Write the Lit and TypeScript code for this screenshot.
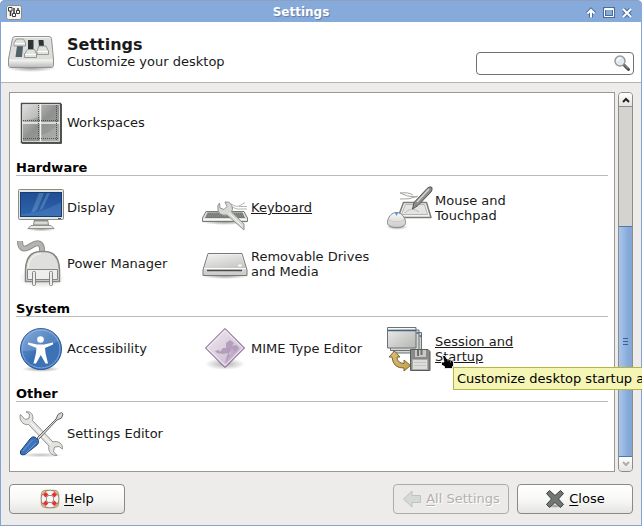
import { LitElement, html, css, svg, type TemplateResult } from "lit";
import { customElement, property, state } from "lit/decorators.js";
import { classMap } from "lit/directives/class-map.js";

const gradients = svg`
  <defs>
    <linearGradient id="metal" x1="0" y1="0" x2="0" y2="1">
      <stop offset="0" stop-color="#fafafa" /><stop offset="1" stop-color="#c9cac7" />
    </linearGradient>
    <linearGradient id="front" x1="0" y1="0" x2="0" y2="1">
      <stop offset="0" stop-color="#f8f8f8" /><stop offset="1" stop-color="#bcbdba" />
    </linearGradient>
    <linearGradient id="steel" x1="0" y1="0" x2="1" y2="1">
      <stop offset="0" stop-color="#ededeb" /><stop offset="1" stop-color="#b4b6b2" />
    </linearGradient>
    <linearGradient id="pane" x1="0" y1="0" x2="1" y2="1">
      <stop offset="0" stop-color="#d2d3d1" /><stop offset="0.5" stop-color="#8f918e" /><stop offset="1" stop-color="#a3a5a2" />
    </linearGradient>
    <linearGradient id="screen" x1="0" y1="0" x2="0" y2="1">
      <stop offset="0" stop-color="#1f4e94" /><stop offset="1" stop-color="#2f66ad" />
    </linearGradient>
    <linearGradient id="blue" x1="0" y1="0" x2="1" y2="1">
      <stop offset="0" stop-color="#6f9fd8" /><stop offset="0.5" stop-color="#3a70b4" /><stop offset="1" stop-color="#3f74b8" />
    </linearGradient>
    <linearGradient id="violet" x1="0" y1="0" x2="1" y2="1">
      <stop offset="0" stop-color="#f2edf3" /><stop offset="1" stop-color="#c3afc9" />
    </linearGradient>
    <linearGradient id="gold" x1="0" y1="0" x2="1" y2="1">
      <stop offset="0" stop-color="#d9be78" /><stop offset="1" stop-color="#c4a04e" />
    </linearGradient>
    <radialGradient id="shade">
      <stop offset="0" stop-color="#000" stop-opacity="0.4" /><stop offset="1" stop-color="#000" stop-opacity="0" />
    </radialGradient>
  </defs>`;

const wrenchPath =
  "M3.5 4.5 L8 9.5 L12 8.5 L12.5 4 L9 1.8 C14 1 17 5 15.5 10.5 L36 32 C41 30 46 34 45.5 39 L42 36.5 L37.5 37 L36.5 41.5 L40 45.5 C34.5 46 30.5 41 32 36 L11.5 14.5 C6 15.5 1.5 10 3.5 4.5 Z";

const glyphs: Record<string, TemplateResult> = {
  mixer: svg`
    <ellipse cx="24" cy="40" rx="25" ry="4" fill="url(#shade)" />
    <path d="M8 8.500 H42 Q44 8.500 44.500 10.500 L46.500 31 V37 Q46.500 39.500 44 39.500 H4 Q1.500 39.500 1.500 37 V31 L5.500 10.500 Q6 8.500 8 8.500 Z" fill="#dddedb" stroke="#90928e" />
    <path d="M2.200 31.500 H45.800 V37 Q45.800 39 44 39 H4 Q2.200 39 2.200 37 Z" fill="url(#front)" />
    <path d="M7.500 9.500 H42.500" stroke="#f6f6f6" />
    <path d="M21 12 H26.500 V21 H21 Z M31.500 12 H36.500 L37 19 H32 Z" fill="#2e3436" />
    <path d="M10 18 H16 L15 29 H8.500 Z" fill="#50616a" />
    <path d="M9.500 11 H16.500 L18.500 15 V18 H7 V15 Z" fill="#e0e2de" stroke="#858880" stroke-width="0.800" />
    <path d="M20.500 21.500 H27.500 L29.500 26 V29.500 H17.500 V26 Z" fill="#e0e2de" stroke="#858880" stroke-width="0.800" />
    <path d="M32 18 H39 L41.500 23 V26.500 H30 V23 Z" fill="#e0e2de" stroke="#858880" stroke-width="0.800" />
    <path d="M7.500 15.500 H18 M18 26.500 H29 M30.500 23.500 H41" stroke="#fff" />`,
  workspaces: svg`
    <rect x="4.500" y="4.500" width="39" height="39" fill="#fff" stroke="#4c4e4c" stroke-width="1.500" />
    <rect x="6" y="6" width="36" height="36" fill="url(#pane)" />
    <path d="M6 6 H23 V17 Q15 21 6 21 Z" fill="#fff" opacity="0.25" />
    <path d="M24 36 Q36 34 42 22 V42 H24 Z" fill="#fff" opacity="0.12" />
    <path d="M23.500 5 V43 M5 24 H43" stroke="#f2f2f2" stroke-width="1.500" />
    <path d="M21.500 6 V42 M39.500 6 V42 M6 21.500 H42 M6 39.500 H42" stroke="#505250" stroke-dasharray="1 1" fill="none" />
    <path d="M44.500 5 V44.500 H5" stroke="#555" fill="none" />`,
  display: svg`
    <ellipse cx="24" cy="45" rx="15" ry="2.500" fill="url(#shade)" />
    <path d="M17.500 35 H30.500 L31.500 41 H16.500 Z" fill="url(#metal)" stroke="#8a8c87" />
    <path d="M17 36.500 H31" stroke="#8a8c87" stroke-width="2" />
    <path d="M14 41.500 H34 L37 44.500 H11 Z" fill="#e9eae7" stroke="#8f918b" />
    <rect x="1.500" y="5.500" width="45" height="30" rx="1" fill="#e6e7e3" stroke="#8a8c86" />
    <rect x="3.500" y="8.500" width="41" height="24" fill="url(#screen)" stroke="#153c74" />
    <path d="M22 9 H27 L20 26 Q18 28 14 29 Z M30 9 H33 L26 24 L22 27 Z" fill="#9dbde6" opacity="0.3" />
    <path d="M4 30 Q26 29 44 18 V32 H4 Z" fill="#6f9bd6" opacity="0.25" />
    <path d="M41 34.500 H44" stroke="#555" />`,
  power: svg`
    <ellipse cx="25" cy="38" rx="23" ry="10" fill="url(#shade)" opacity="0.6" />
    <path d="M3 1 C3 8 6 9.500 10 8 S18 2 22 3.500 Q25.500 5 25 12" fill="none" stroke="#8f918d" stroke-width="6" />
    <path d="M3 1 C3 8 6 9.500 10 8 S18 2 22 3.500 Q25.500 5 25 12" fill="none" stroke="#b4b5b3" stroke-width="4" />
    <path d="M8.500 41.500 V30 Q9 12 23 11.500 H28 Q42 12 42.500 30 V41.500 Z" fill="#dfe0de" stroke="#858783" stroke-width="1.500" />
    <path d="M10.500 29.500 H40.500 V39.500 H10.500 Z" fill="#eeeeec" stroke="#858783" />
    <path d="M11 28 Q12 15 24 13.500" fill="none" stroke="#f8f8f8" />
    <rect x="15.500" y="31.500" width="3" height="14" rx="1" fill="#ececea" stroke="#858783" />
    <rect x="32.500" y="31.500" width="3" height="14" rx="1" fill="#ececea" stroke="#858783" />`,
  keyboard: svg`
    <ellipse cx="24" cy="38" rx="24" ry="3" fill="url(#shade)" />
    <path d="M30 20 Q36 24 40 21 T44 19 M31 23 L36 25 H46 M38 22.500 H46" fill="none" stroke="#b4b6b3" />
    <path d="M5 27.500 H43 L46.500 34 V37.500 H1.500 V34 Z" fill="#dfe0dd" stroke="#777974" />
    <path d="M6.500 28.500 H41.500 L44 34 H4 Z" fill="#777976" />
    <path d="M6 30 H42 M5 32 H43" stroke="#9c9e9a" stroke-dasharray="1 1" />
    <path d="M2 35.500 H46" stroke="#f7f7f6" />
    <path d="M18.500 19 L19 24 L23 25.500 L26 22.500 L24 18 Q31 17 31.500 25 L30.500 28 L43 40 V46 L26 31 Q18 32 17 26 Q16 21 18.500 19 Z" fill="#d6d8d4" stroke="#92948f" />
    <path d="M28 29 L41 42" stroke="#f6f6f5" />`,
  drive: svg`
    <ellipse cx="24" cy="36" rx="24" ry="3" fill="url(#shade)" />
    <path d="M7 13.500 H41 L46 30 V35.500 H2 V30 Z" fill="url(#metal)" stroke="#777974" stroke-linejoin="round" />
    <path d="M8 14.500 H40 L44.500 28 H3.500 Z" fill="url(#steel)" opacity="0.6" />
    <path d="M3 28.500 H45" stroke="#fdfdfd" />
    <path d="M6 30.500 H41" stroke="#4c4e4b" stroke-width="1.500" />
    <ellipse cx="39" cy="25.500" rx="2" ry="1.200" fill="#f7f7f6" />`,
  mouse: svg`
    <path d="M15 9 Q22 13 32 13 M15 15 Q24 16 33 12 M15 9 Q24 8 28 11" fill="none" stroke="#a2a4a1" />
    <path d="M18.500 18.500 H41.500 L46 33.500 H13 Z" fill="#f3f3f2" stroke="#7a7c79" stroke-width="1.500" stroke-linejoin="round" />
    <path d="M20.500 20.500 H39.500 L42.500 30.500 H16.500 Z" fill="#e4e5e3" stroke="#b4b6b3" />
    <path d="M20 29 Q26 22 34 28" fill="none" stroke="#bbb" />
    <path d="M27.500 25 L29 18.500 L42 4.500 Q45 1.500 47 3.500 Q47.500 6 46 8 L33 21.500 Z" fill="#8b8d89" stroke="#555754" />
    <path d="M32 18 L44 5" stroke="#d5d6d3" stroke-width="1.500" />
    <ellipse cx="12" cy="43" rx="11" ry="3" fill="url(#shade)" />
    <path d="M11.500 28.500 C17 28.500 20.500 34 20.500 38.500 C20.500 42 17 43.500 11.500 43.500 S2.500 42 2.500 38.500 C2.500 34 6 28.500 11.500 28.500 Z" fill="url(#metal)" stroke="#858783" />
    <path d="M3.500 36 Q11.500 40 19.500 36" fill="none" stroke="#c8c9c6" />
    <path d="M9.500 28 H13.500 L11.500 32 Z" fill="#5b92d5" />`,
  accessibility: svg`
    <ellipse cx="24" cy="44" rx="19" ry="3" fill="url(#shade)" />
    <circle cx="24" cy="24" r="20.500" fill="url(#blue)" stroke="#2b5a99" />
    <circle cx="24" cy="24" r="19" fill="none" stroke="#7fa9de" />
    <path d="M5.500 26 Q22 27 42 16 A19 19 0 0 0 5.500 26 Z" fill="#fff" opacity="0.15" />
    <circle cx="23.500" cy="14.500" r="3.300" fill="#fff" />
    <path d="M11 17.500 L20 19.500 H27 L36 17.500 V19.500 L28 23 L28.500 28 L31 38.500 H28.500 L23.800 30 L19 38.500 H16.500 L19 28 L19.500 23 L11 19.500 Z" fill="#fff" />`,
  mime: svg`
    <ellipse cx="24" cy="39" rx="20" ry="6" fill="url(#shade)" opacity="0.8" />
    <path d="M24 3.500 L43.500 23 L24 42.500 L4.500 23 Z" fill="url(#violet)" stroke="#6f4c7c" />
    <path d="M24 5.500 L41.500 23 L24 40.500 L6.500 23 Z" fill="none" stroke="#f7f3f8" />
    <path d="M14 26 L18 25 L19 27 L22 23 L25 23 L25 18 L29 15 L33 18 L31 21 L35 20 L38 23 L34 27 L31 24 L28 28 L29 31 L26 36 L24 38 L27 28 L22 29 L16 28 Z" fill="#a992b3" opacity="0.8" />
    <path d="M25 38 Q31 32 29 22 L36 25 L40 23 L25 39 Z" fill="#b9a4c1" opacity="0.7" />`,
  session: svg`
    <g stroke="#6b7174">
      <path d="M8.500 7.500 H36.500 V28 H8.500 Z" fill="#d5d6d4" />
      <path d="M5.500 5 H34 V25.500 H5.500 Z" fill="#d5d6d4" />
      <path d="M2.500 2.500 H31 V23 H2.500 Z" fill="url(#steel)" />
    </g>
    <path d="M3 5.500 H31 M31.500 8 H34 M34.500 11 H37" stroke="#45647c" stroke-width="1.500" />
    <path d="M3 3.500 H30" stroke="#f8f8f8" />
    <path d="M9.500 26 L15 32 H12 Q12 38 19 38.500 V35 L25.500 40.500 L19 46 V43 Q8 43.500 7 32 H4 Z" fill="url(#gold)" stroke="#7e652a" stroke-linejoin="round" />
    <path d="M25.500 24.500 H43 L45 26.500 V45.500 H25.500 Z" fill="#888a87" stroke="#5a5c5a" />
    <rect x="30" y="25" width="11" height="7" fill="#c8c9c7" />
    <path d="M33 25 V31 M36.500 25 V30" stroke="#6e706d" stroke-width="2" />
    <rect x="27.500" y="34.500" width="15" height="10" fill="#dcdcda" stroke="#a9aaa8" />
    <path d="M29 37.500 H41 M29 40.500 H41" stroke="#c4c5c3" />`,
  tools: svg`
    <ellipse cx="24" cy="45" rx="22" ry="2.500" fill="url(#shade)" opacity="0.6" />
    <path d="${wrenchPath}" fill="#e3e4e1" stroke="#92948f" />
    <path d="M14 13 L34 34" stroke="#fff" />
    <path d="M20 28 L39 9 L41 4.500 L44.500 2.500 L46 4 L44.500 8 L40 10 L21.500 29.500 Z" fill="#d8d9d7" stroke="#626461" />
    <path d="M3.500 41 L13 29 Q15 26 18 27 L21.500 30.500 Q22 33 20 35 L8 44.500 Q5 45.500 3.500 44 Z" fill="#3e73b8" stroke="#204a87" />
    <path d="M6 41 L15.500 30 M9 43 L19 33" stroke="#6f9cd6" />`,
  channel: svg`
    <rect x="0.500" y="0.500" width="15" height="14" rx="2" fill="#f4f3ef" stroke="#8a8c86" />
    <path d="M4.500 6 V11 M8 3 V8 M12 3 V5" stroke="#33373a" stroke-width="1.500" />
    <path d="M2.500 2.500 H6 V6 H2.500 Z M6.500 8.500 H9.500 V11.500 H6.500 Z M10.500 5.500 H13.500 V8.500 H10.500 Z" fill="#fff" stroke="#33373a" />`,
  search: svg`
    <path d="M10 10 L14.500 14.500" stroke="#4b4d4a" stroke-width="3" stroke-linecap="round" />
    <path d="M10 9.500 L14 13.500" stroke="#aeb0ac" />
    <circle cx="6" cy="6" r="5" fill="#dfeaf4" stroke="#9a9c98" stroke-width="1.500" />
    <path d="M3 6 Q4 3 7 3" fill="none" stroke="#fff" stroke-width="1.500" />`,
  help: svg`
    <rect x="1.500" y="1.500" width="17" height="17" rx="4" fill="none" stroke="#c6a565" stroke-width="1.500" />
    <circle cx="10" cy="10" r="6.300" fill="none" stroke="#777974" stroke-width="6" />
    <circle cx="10" cy="10" r="6.300" fill="none" stroke="#f3f3f1" stroke-width="4.500" />
    <path d="M4.300 4.300 L7 7 M15.700 4.300 L13 7 M4.300 15.700 L7 13 M15.700 15.700 L13 13" stroke="#ee2c2c" stroke-width="4" />`,
  back: svg`
    <path d="M1.500 10 L10 2 V6.500 H18.500 V13.500 H10 V18 Z" fill="#d5d9d5" stroke="#bfc3bf" stroke-linejoin="round" />`,
  close: svg`
    <ellipse cx="10" cy="17" rx="8" ry="2" fill="url(#shade)" />
    <path d="M4.500 1.500 L10 6.500 L15.500 1.500 L18.500 4.500 L13.500 10 L18.500 15.500 L15.500 18.500 L10 13.500 L4.500 18.500 L1.500 15.500 L6.500 10 L1.500 4.500 Z" fill="#737774" stroke="#3c403d" stroke-linejoin="round" />`,
  up: svg`
    <path d="M5 9.500 V4 M1.500 5.500 L5 2 L8.500 5.500" fill="none" stroke="#4a6b9c" stroke-width="4" />
    <path d="M5 9.500 V3 M1.500 5.500 L5 2 L8.500 5.500" fill="none" stroke="#fff" stroke-width="2" />`,
  maximize: svg`
    <rect x="0.500" y="0.500" width="9" height="8" fill="none" stroke="#4a6b9c" stroke-width="3" />
    <path d="M0.500 0.500 H9.500 V8.500 H0.500 Z M1 1.500 H9" fill="none" stroke="#fff" />`,
  cross: svg`
    <path d="M1.500 1.500 L8.500 8.500 M8.500 1.500 L1.500 8.500" stroke="#4a6b9c" stroke-width="4" />
    <path d="M1 1 L9 9 M9 1 L1 9" stroke="#fff" stroke-width="2" />`,
  chevronUp: svg`<path d="M2 7 L5 4 L8 7" fill="none" stroke="#222" stroke-width="2" />`,
  chevronDown: svg`<path d="M2 3 L5 6 L8 3" fill="none" stroke="#b0aeab" stroke-width="2" />`,
  hand: svg`
    <path d="M2.500 1.500 H5 L7 5 H9 L9.500 6 H11.500 L12 7 H13.500 V12.500 H12.500 V14.500 H4.500 V12.500 L1.500 11 V8 H4 Z" fill="#000" stroke="#fff" stroke-width="0.800" />
    <path d="M8 5.500 V7.500 M10.500 6.500 V8.500" stroke="#777" />`,
};

@customElement("ui-icon")
class UiIcon extends LitElement {
  @property() name = "";
  @property({ type: Number }) size = 48;

  static styles = css`
    :host { display: block; flex: none; }
    svg { display: block; overflow: visible; }
  `;

  render() {
    return html`<svg width=${this.size} height=${this.size} viewBox="0 0 ${this.size} ${this.size}" aria-hidden="true">
      ${gradients}${glyphs[this.name]}
    </svg>`;
  }
}

interface Item { icon: string; label: string; linked?: boolean; tip?: string }
interface Section { title?: string; items: Item[] }

const sections: Section[] = [
  { items: [{ icon: "workspaces", label: "Workspaces" }] },
  {
    title: "Hardware",
    items: [
      { icon: "display", label: "Display" },
      { icon: "keyboard", label: "Keyboard", linked: true },
      { icon: "mouse", label: "Mouse and Touchpad" },
      { icon: "power", label: "Power Manager" },
      { icon: "drive", label: "Removable Drives and Media" },
    ],
  },
  {
    title: "System",
    items: [
      { icon: "accessibility", label: "Accessibility" },
      { icon: "mime", label: "MIME Type Editor" },
      { icon: "session", label: "Session and Startup", linked: true, tip: "Customize desktop startup a" },
    ],
  },
  { title: "Other", items: [{ icon: "tools", label: "Settings Editor" }] },
];

@customElement("app-root")
class AppRoot extends LitElement {
  @state() private query = "";

  static styles = css`
    :host { display: block; position: relative; overflow: hidden; font: 13px/15px "DejaVu Sans", sans-serif; color: #1a1a1a; }
    * { box-sizing: border-box; }
    button { font: inherit; color: inherit; margin: 0; padding: 0; border: 0; background: none; }
    h1, h2, p { margin: 0; }
    .window { display: flex; flex-direction: column; min-height: 100vh; background: #edecea; border: solid #86a3d3; border-width: 0 1px 1px; border-radius: 5px 5px 0 0; }
    .titlebar { display: grid; grid-template-columns: 16px 1fr auto; align-items: center; height: 22px; margin: 0 -1px; padding: 2px 10px 0 6px; background: #86aad9; border-top: 1px solid #8e9fc4; border-radius: 5px 5px 0 0; }
    .caption { font-weight: bold; font-size: 12px; text-align: center; color: #fff; text-shadow: 1px 1px 1px #5a7cae; }
    .controls { display: flex; justify-content: flex-end; gap: 8px; padding-left: 6px; }
    .header { display: flex; align-items: center; height: 61px; padding: 0 7px 0 6px; background: #fff; border-bottom: 1px solid #b5b3b1; }
    .heading { flex: 1; padding-left: 12px; }
    .heading h1 { font-size: 16px; line-height: 18px; }
    .search { display: flex; align-items: center; width: 158px; height: 23px; margin-top: 22px; padding: 0 3px; background: #fff; border: 1px solid #72706d; border-radius: 4px; }
    .search input { flex: 1; min-width: 0; border: 0; outline: 0; padding: 0 2px; font: inherit; background: none; }
    .body { flex: 1; display: flex; gap: 3px; padding: 9px 8px 0; }
    .list { flex: 1; padding: 6px 6px 12px; background: #fff; border: 1px solid #9a9895; }
    .list h2 { margin: 13px 0 8px; font-size: 13px; line-height: 15px; color: #000; border-bottom: 1px solid #bcbab8; }
    .grid { display: grid; grid-template-columns: repeat(auto-fill, 184px); row-gap: 8px; padding-left: 1px; }
    .cell { position: relative; }
    .item { display: flex; align-items: center; gap: 2px; width: 100%; height: 48px; text-align: left; }
    .item span { max-width: 126px; padding-bottom: 1px; }
    .item:hover span, .linked span { text-decoration: underline; }
    .cursor { position: absolute; left: 55px; top: 29px; }
    .tooltip { position: absolute; left: 68px; top: 42px; width: 240px; height: 23px; padding: 3px; white-space: nowrap; color: #000; background: #f5f5b5; border: 1px solid #b5b541; }
    .scrollbar { display: flex; flex-direction: column; width: 15px; background: #d5d3d0; border: 1px solid #8e8c89; border-radius: 4px; overflow: hidden; }
    .step { display: grid; place-items: center; height: 14px; background: linear-gradient(#fff, #e4e3e1); }
    .step.first { border-bottom: 1px solid #8e8c89; }
    .track { flex: 1; display: flex; flex-direction: column; justify-content: flex-end; }
    .thumb { display: flex; flex-direction: column; align-items: center; justify-content: center; gap: 2px; height: 66%; margin: 0 -1px; border: 1px solid #5078a8; background: linear-gradient(90deg, #a9c7ec, #86aad9 70%, #82a6d6); }
    .thumb i { width: 5px; height: 1px; background: #35608f; }
    .footer { display: flex; gap: 8px; padding: 12px 8px 11px; }
    .spacer { flex: 1; }
    .action { display: flex; align-items: center; justify-content: center; gap: 4px; width: 116px; height: 30px; padding-bottom: 1px; color: #000; background: linear-gradient(#fff, #f8f8f7 50%, #e5e4e2); border: 1px solid #8b8986; border-radius: 4px; }
    .action:disabled { color: #b3b1ae; text-shadow: 1px 1px 0 #fff; background: #ebeae8; border-color: #aeaca9; }
    u { text-underline-offset: 2px; }
  `;

  private item(entry: Item) {
    return html`<div class="cell">
      <button class=${classMap({ item: true, linked: !!entry.linked })}>
        <ui-icon name=${entry.icon}></ui-icon><span>${entry.label}</span>
      </button>
      ${entry.tip
        ? html`<div class="tooltip" role="tooltip">${entry.tip}</div><ui-icon class="cursor" name="hand" size="16"></ui-icon>`
        : null}
    </div>`;
  }

  render() {
    return html`<div class="window">
      <div class="titlebar">
        <ui-icon name="channel" size="16"></ui-icon>
        <span class="caption">Settings</span>
        <div class="controls">
          <button aria-label="Shade"><ui-icon name="up" size="10"></ui-icon></button>
          <button aria-label="Maximize"><ui-icon name="maximize" size="10"></ui-icon></button>
          <button aria-label="Close window"><ui-icon name="cross" size="10"></ui-icon></button>
        </div>
      </div>
      <header class="header">
        <ui-icon name="mixer"></ui-icon>
        <div class="heading"><h1>Settings</h1><p>Customize your desktop</p></div>
        <label class="search">
          <input type="text" aria-label="Search settings" .value=${this.query}
            @input=${(e: InputEvent) => (this.query = (e.target as HTMLInputElement).value)} />
          <ui-icon name="search" size="16"></ui-icon>
        </label>
      </header>
      <main class="body">
        <div class="list">
          ${sections.map(
            (s) => html`<section>
              ${s.title ? html`<h2>${s.title}</h2>` : null}
              <div class="grid">${s.items.map((i) => this.item(i))}</div>
            </section>`
          )}
        </div>
        <div class="scrollbar">
          <button class="step first" aria-label="Scroll up"><ui-icon name="chevronUp" size="10"></ui-icon></button>
          <div class="track"><div class="thumb"><i></i><i></i><i></i></div></div>
          <button class="step" aria-label="Scroll down"><ui-icon name="chevronDown" size="10"></ui-icon></button>
        </div>
      </main>
      <footer class="footer">
        <button class="action"><ui-icon name="help" size="20"></ui-icon><span><u>H</u>elp</span></button>
        <div class="spacer"></div>
        <button class="action" disabled><ui-icon name="back" size="20"></ui-icon><span><u>A</u>ll Settings</span></button>
        <button class="action"><ui-icon name="close" size="20"></ui-icon><span><u>C</u>lose</span></button>
      </footer>
    </div>`;
  }
}
